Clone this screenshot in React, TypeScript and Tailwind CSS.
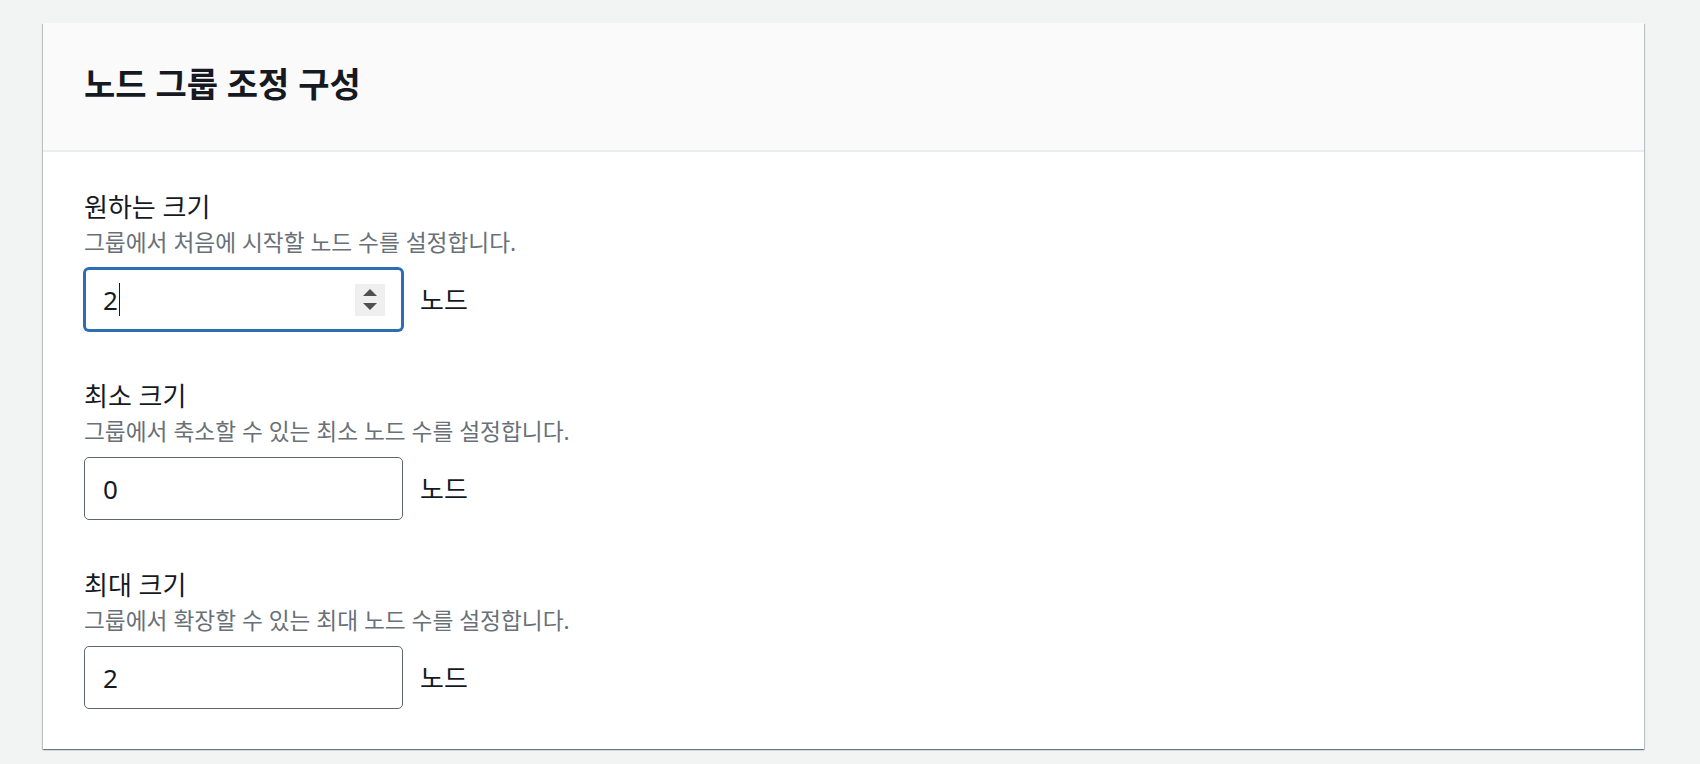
const font = { fontFamily: '"Noto Sans", "Noto Sans CJK KR", sans-serif' };

type Field = {
  label: string;
  desc: string;
  value: string;
  focused?: boolean;
};

const fields: Field[] = [
  { label: "원하는 크기", desc: "그룹에서 처음에 시작할 노드 수를 설정합니다.", value: "2", focused: true },
  { label: "최소 크기", desc: "그룹에서 축소할 수 있는 최소 노드 수를 설정합니다.", value: "0" },
  { label: "최대 크기", desc: "그룹에서 확장할 수 있는 최대 노드 수를 설정합니다.", value: "2" },
];

function Stepper() {
  return (
    <div className="flex h-[32px] w-[30px] flex-col items-center justify-center gap-[7px] bg-[#efefef]">
      <svg width="14" height="7" viewBox="0 0 14 7">
        <path d="M7 0 L14 7 L0 7 Z" fill="#505050" />
      </svg>
      <svg width="14" height="7" viewBox="0 0 14 7">
        <path d="M0 0 L14 0 L7 7 Z" fill="#505050" />
      </svg>
    </div>
  );
}

function NumberInput({ value, focused }: { value: string; focused?: boolean }) {
  return (
    <div
      className={
        focused
          ? "flex h-[63px] w-[319px] items-center rounded-[5px] border-2 border-[#2f6db3] bg-white pl-[17px] pr-[16px] shadow-[0_0_0_1px_#2f6db3]"
          : "flex h-[63px] w-[319px] items-center rounded-[5px] border border-[#5f6670] bg-white pl-[18px] pr-[16px]"
      }
    >
      <span className="text-[26px] leading-none text-[#16191f]">{value}</span>
      {focused && <span className="ml-px h-[33px] w-px bg-[#16191f]" />}
      <div className="flex-1" />
      {focused && <Stepper />}
    </div>
  );
}

export default function App() {
  return (
    <div className="min-h-[764px] bg-[#f2f3f3] pl-[43px] pr-[56px] pt-[23px]" style={font}>
      <section className="bg-white shadow-[0_1px_1px_0_rgba(0,28,36,0.35),1px_1px_1px_0_rgba(0,28,36,0.18),-1px_1px_1px_0_rgba(0,28,36,0.18)]">
        <div className="flex h-[129px] items-center border-b-2 border-[#eaeded] bg-[#fafafa] px-[41px] pb-[6px]">
          <h2 className="text-[34px] font-bold leading-[42px] text-[#16191f]">노드 그룹 조정 구성</h2>
        </div>
        <div className="flex flex-col gap-[45px] px-[41px] pb-[40px] pt-[35px]">
          {fields.map((f) => (
            <div key={f.label} className="flex flex-col">
              <div className="text-[26px] leading-[41px] text-[#16191f]">{f.label}</div>
              <div className="text-[22.7px] leading-[30px] text-[#687078]">{f.desc}</div>
              <div className="mt-[10px] flex items-center gap-[17px]">
                <NumberInput value={f.value} focused={f.focused} />
                <span className="text-[26px] leading-none text-[#16191f]">노드</span>
              </div>
            </div>
          ))}
        </div>
      </section>
    </div>
  );
}
